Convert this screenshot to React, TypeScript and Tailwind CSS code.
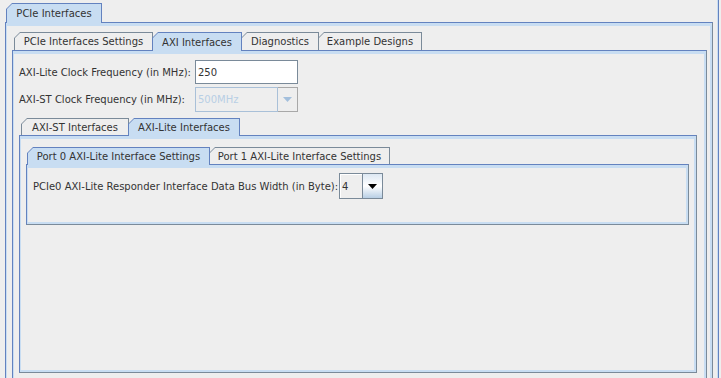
import type { ReactNode } from 'react'

// Metal (Ocean) style nested tab panes

function Tab({
  label,
  className,
  selected = false,
}: {
  label: string
  className: string
  selected?: boolean
}) {
  return (
    <div
      className={`${className} ${
        selected ? 'relative z-10 -mb-px bg-[#6382bf]' : 'bg-[#7a8a99]'
      } shrink-0 px-px pt-px [clip-path:polygon(6px_0,100%_0,100%_100%,0_100%,0_6px)]`}
    >
      <div
        className={`flex h-full items-center justify-center whitespace-nowrap [clip-path:polygon(5px_0,100%_0,100%_100%,0_100%,0_5px)] ${
          selected ? 'bg-[#c8ddf2]' : 'bg-[#eeeeee]'
        }`}
      >
        {label}
      </div>
    </div>
  )
}

function Pane({ className, children }: { className: string; children?: ReactNode }) {
  return (
    <div
      className={`border border-t-[#6382bf] border-l-[#6382bf] border-r-[#7a8a99] border-b-[#7a8a99] ${className}`}
    >
      <div className="h-full border-t-[3px] border-l border-r-2 border-b-2 border-[#c8ddf2] bg-[#eeeeee]">
        {children}
      </div>
    </div>
  )
}

function Arrow({ color }: { color: string }) {
  return (
    <svg width="9" height="5" viewBox="0 0 9 5">
      <path d="M0 0 H9 L4.5 5 Z" fill={color} />
    </svg>
  )
}

export default function App() {
  return (
    <div className="flex h-[378px] w-[721px] overflow-hidden bg-[#eeeeee] font-['DejaVu_Sans',sans-serif] text-[10px] text-[#333333]">
      <div className="ml-[5px] mt-[3px] flex w-[708px] shrink-0 flex-col">
        {/* level 1 */}
        <div className="ml-px flex h-[19px] items-end">
          <Tab label="PCIe Interfaces" className="w-[96px] h-[20px]" selected />
        </div>
        <Pane className="h-[400px]">
          <div className="pl-[5px] pr-[3px] pt-[6px]">
            {/* level 2 */}
            <div className="ml-[2px] flex h-[18px] items-end">
              <Tab label="PCIe Interfaces Settings" className="w-[139px] h-[18px]" />
              <Tab label="AXI Interfaces" className="-ml-px w-[90px] h-[19px]" selected />
              <Tab label="Diagnostics" className="-ml-px w-[78px] h-[18px]" />
              <Tab label="Example Designs" className="-ml-px w-[104px] h-[18px]" />
            </div>
            <Pane className="h-[380px]">
              <div className="flex flex-col pl-[5px] pt-[6px]">
                <div className="flex h-[24px] items-center">
                  <span className="w-[176px]">AXI-Lite Clock Frequency (in MHz):</span>
                  <div className="flex h-[24px] w-[103px] items-center border border-[#7a8a99] bg-white pl-[2px] text-[#333333]">
                    250
                  </div>
                </div>
                <div className="mt-[3px] flex h-[25px] items-center">
                  <span className="w-[176px]">AXI-ST Clock Frequency (in MHz):</span>
                  <div className="flex h-[25px] w-[103px]">
                    <div className="flex flex-1 items-center border border-[#a9c0d8] bg-[#eeeeee] pl-[2px] text-[#b8cfe5]">
                      500MHz
                    </div>
                    <div className="flex w-[20px] items-center justify-center border border-l-0 border-[#a8a8a8]">
                      <Arrow color="#a3bfdc" />
                    </div>
                  </div>
                </div>
              </div>
              {/* level 3 */}
              <div className="mt-[6px] w-[683px] pl-[5px]">
                <div className="ml-[2px] flex h-[17px] items-end">
                  <Tab label="AXI-ST Interfaces" className="w-[108px] h-[17px]" />
                  <Tab label="AXI-Lite Interfaces" className="-ml-px w-[112px] h-[18px]" selected />
                </div>
                <Pane className="h-[238px]">
                  <div className="pl-[5px] pr-[5px] pt-[8px]">
                    {/* level 4 */}
                    <div className="ml-px flex h-[17px] items-end">
                      <Tab
                        label="Port 0 AXI-Lite Interface Settings"
                        className="w-[183px] h-[18px]"
                        selected
                      />
                      <Tab
                        label="Port 1 AXI-Lite Interface Settings"
                        className="-ml-px w-[181px] h-[17px]"
                      />
                    </div>
                    <Pane className="h-[61px] w-[663px]">
                      <div className="flex items-center pl-[5px] pt-[5px]">
                        <span className="w-[306px]">
                          PCIe0 AXI-Lite Responder Interface Data Bus Width (in Byte):
                        </span>
                        <div className="flex h-[26px] w-[44px]">
                          <div className="flex flex-1 items-center border border-[#7a8a99] bg-[#eeeeee] pl-[2px] shadow-[inset_1px_1px_0_#ffffff]">
                            4
                          </div>
                          <div className="flex w-[20px] items-center justify-center border border-l-0 border-[#7a8a99] bg-gradient-to-b from-[#dde8f3] via-white to-[#b8cfe5]">
                            <Arrow color="#000000" />
                          </div>
                        </div>
                      </div>
                    </Pane>
                  </div>
                </Pane>
              </div>
            </Pane>
          </div>
        </Pane>
      </div>
      <div className="ml-[4px] w-px shrink-0 bg-[#c8ddf2]" />
      <div className="w-px shrink-0 bg-[#6382bf]" />
    </div>
  )
}
